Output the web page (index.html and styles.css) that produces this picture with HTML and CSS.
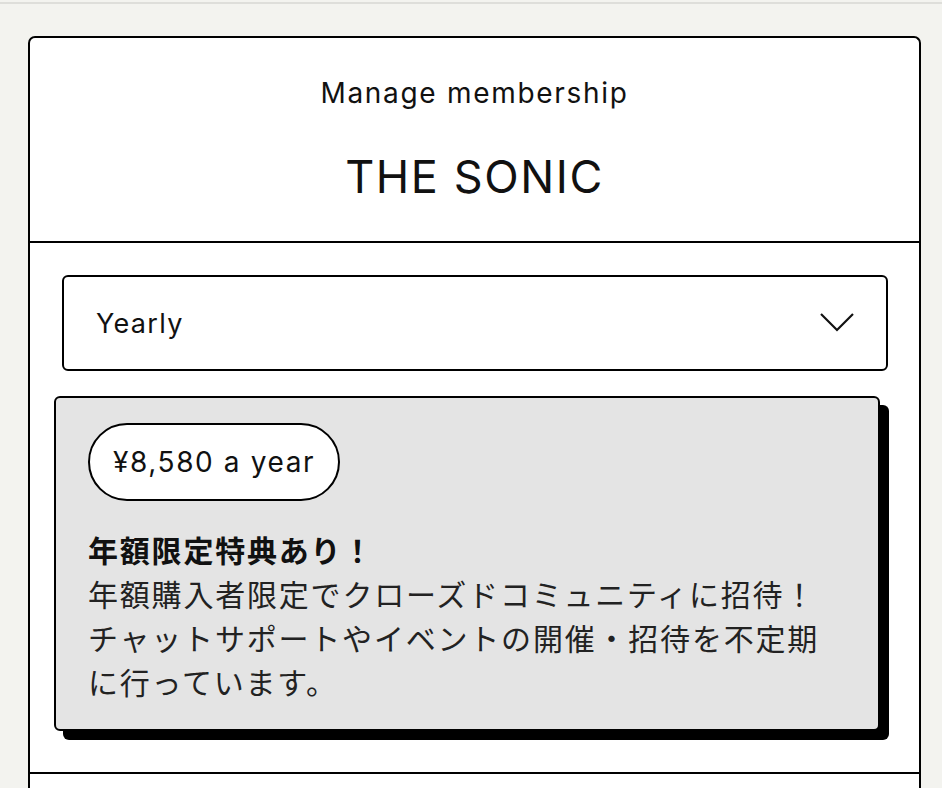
FILE: index.html
```html
<!DOCTYPE html>
<html lang="ja">
<head>
<meta charset="utf-8">
<title>Manage membership</title>
<link rel="stylesheet" href="styles.css">
</head>
<body>
<div class="topline"></div>
<main class="page">
  <section class="card">
    <header class="card-head">
      <p class="eyebrow">Manage membership</p>
      <h1 class="title">THE SONIC</h1>
    </header>
    <div class="card-body">
      <div class="select">
        <span class="select-label">Yearly</span>
        <svg class="chevron" width="34" height="19" viewBox="0 0 34 19" aria-hidden="true">
          <polyline points="1,1 17,17 33,1" fill="none" stroke="#111" stroke-width="2.2"/>
        </svg>
      </div>
      <div class="plan">
        <span class="price">¥8,580 a year</span>
        <p class="plan-text"><strong>年額限定特典あり！</strong><br>年額購入者限定でクローズドコミュニティに招待！<br>チャットサポートやイベントの開催・招待を不定期<br>に行っています。</p>
      </div>
    </div>
    <div class="card-foot"></div>
  </section>
</main>
</body>
</html>
```

FILE: styles.css
```css
* { box-sizing: border-box; }
html, body { margin: 0; padding: 0; }
body {
  background: #f3f3ef;
  font-family: Inter, "Noto Sans CJK JP", sans-serif;
  color: #111;
  overflow: hidden;
  height: 788px;
}
.topline {
  height: 2px;
  margin-top: 2px;
  background: #dededa;
}
.page {
  padding: 32px 21px 0 28px;
}
.card {
  background: #fff;
  border: 2px solid #000;
  border-radius: 7px 7px 0 0;
  border-bottom: none;
  height: 800px;
}
.card-head {
  text-align: center;
  border-bottom: 2px solid #000;
  height: 205px;
  padding-top: 38px;
}
.eyebrow {
  margin: 0;
  font-size: 28px;
  line-height: 34px;
  letter-spacing: 1.7px;
  font-weight: 400;
}
.title {
  margin: 0;
  margin-top: 40px;
  font-size: 45px;
  line-height: 54px;
  letter-spacing: 1.6px;
  font-weight: 400;
}
.card-body {
  padding: 32px 31px 0 32px;
  border-bottom: 2px solid #000;
  height: 531px;
}
.select {
  height: 96px;
  border: 2px solid #000;
  border-radius: 6px;
  display: flex;
  align-items: center;
  justify-content: space-between;
  padding: 0 32px 0 32px;
}
.select-label {
  font-size: 27px;
  letter-spacing: 1.3px;
}
.chevron { display: block; margin-top: -2px; }
.plan {
  margin: 25px 8px 0 -8px;
  background: #e4e4e4;
  border: 2px solid #000;
  border-radius: 6px;
  box-shadow: 9px 9px 0 #000;
  padding: 25px 32px 26px 32px;
}
.price {
  display: inline-flex;
  align-items: center;
  height: 78px;
  padding: 0 23px;
  border: 2px solid #000;
  border-radius: 40px;
  background: #fff;
  font-size: 28px;
  letter-spacing: 1.6px;
}
.plan-text {
  margin: 26px 0 0;
  font-family: "Noto Sans CJK JP", sans-serif;
  font-size: 30px;
  line-height: 44px;
  letter-spacing: 1.8px;
  color: #222;
}
.plan-text strong {
  color: #111;
  font-weight: 700;
}
```
